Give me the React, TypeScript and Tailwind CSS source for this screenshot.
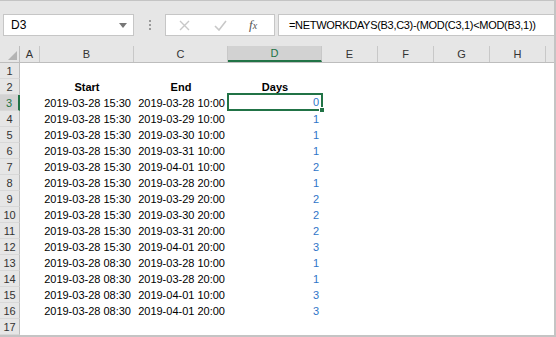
import React from 'react';

const cols = [
  { key: 'A', w: 'w-[20px]' },
  { key: 'B', w: 'w-[94px]' },
  { key: 'C', w: 'w-[94px]' },
  { key: 'D', w: 'w-[94px]' },
  { key: 'E', w: 'w-[56px]' },
  { key: 'F', w: 'w-[56px]' },
  { key: 'G', w: 'w-[56px]' },
  { key: 'H', w: 'w-[56px]' },
];

const data: [string, string, number][] = [
  ['2019-03-28 15:30', '2019-03-28 10:00', 0],
  ['2019-03-28 15:30', '2019-03-29 10:00', 1],
  ['2019-03-28 15:30', '2019-03-30 10:00', 1],
  ['2019-03-28 15:30', '2019-03-31 10:00', 1],
  ['2019-03-28 15:30', '2019-04-01 10:00', 2],
  ['2019-03-28 15:30', '2019-03-28 20:00', 1],
  ['2019-03-28 15:30', '2019-03-29 20:00', 2],
  ['2019-03-28 15:30', '2019-03-30 20:00', 2],
  ['2019-03-28 15:30', '2019-03-31 20:00', 2],
  ['2019-03-28 15:30', '2019-04-01 20:00', 3],
  ['2019-03-28 08:30', '2019-03-28 10:00', 1],
  ['2019-03-28 08:30', '2019-03-28 20:00', 1],
  ['2019-03-28 08:30', '2019-04-01 10:00', 3],
  ['2019-03-28 08:30', '2019-04-01 20:00', 3],
];

function RowHead({ n, active }: { n: number; active?: boolean }) {
  return (
    <div
      className={
        'w-[20px] h-[16px] shrink-0 flex items-center justify-center text-[11px] border-b border-[#d8d8d8] ' +
        (active
          ? 'bg-[#d2d2d2] text-[#217346] border-r-2 border-r-[#217346]'
          : 'bg-[#e6e6e6] text-[#333] border-r border-r-[#bdbdbd]')
      }
    >
      {n}
    </div>
  );
}

function Row({ n, children, active }: { n: number; children?: React.ReactNode; active?: boolean }) {
  return (
    <div className="flex h-[16px] leading-[16px]">
      <RowHead n={n} active={active} />
      {children}
    </div>
  );
}

export default function App() {
  return (
    <div
      className="w-[556px] h-[337px] bg-[#e6e6e6] border-t border-r-2 border-b-2 border-[#c4c4c4] overflow-hidden text-black"
      style={{ fontFamily: '"Liberation Sans", Arial, sans-serif' }}
    >
      {/* formula bar */}
      <div className="h-[45px] flex items-start pt-[13px]">
        <div className="ml-[3px] w-[131px] shrink-0 h-[22px] bg-white border border-[#c6c6c6] flex items-center pl-[7px] pr-[6px] text-[12px]">
          <span className="flex-1">D3</span>
          <svg width="8" height="5" viewBox="0 0 8 5">
            <path d="M0 0h8L4 5z" fill="#777" />
          </svg>
        </div>
        <div className="w-[31px] shrink-0 h-[22px] flex flex-col items-center justify-center gap-[2px]">
          <span className="w-[2px] h-[2px] bg-[#9a9a9a]" />
          <span className="w-[2px] h-[2px] bg-[#9a9a9a]" />
          <span className="w-[2px] h-[2px] bg-[#9a9a9a]" />
        </div>
        <div className="w-[110px] shrink-0 h-[22px] bg-white border border-[#c6c6c6] flex items-center">
          <svg className="ml-[13px]" width="11" height="11" viewBox="0 0 11 11">
            <path d="M1 1l9 9M10 1l-9 9" stroke="#c8c8c8" strokeWidth="1.4" />
          </svg>
          <svg className="ml-[24px]" width="13" height="11" viewBox="0 0 13 11">
            <path d="M1 6l4 4 7-9" stroke="#c8c8c8" strokeWidth="1.6" fill="none" />
          </svg>
          <span
            className="ml-[22px] text-[13px] text-[#555] italic"
            style={{ fontFamily: '"Liberation Serif", serif' }}
          >
            f<span className="text-[10px]">x</span>
          </span>
        </div>
        <div className="ml-[3px] flex-1 min-w-0 h-[22px] bg-white border border-[#c6c6c6] border-r-0 flex items-center pl-[10px] text-[11px] tracking-[-0.3px] whitespace-nowrap overflow-hidden">
          =NETWORKDAYS(B3,C3)-(MOD(C3,1)&lt;MOD(B3,1))
        </div>
      </div>

      {/* column headers */}
      <div className="flex h-[17px] border-b border-[#bdbdbd] text-[11px] text-[#333]">
        <div className="w-[20px] bg-[#e6e6e6] border-r border-[#bdbdbd] relative">
          <svg className="absolute right-[2px] bottom-[2px]" width="9" height="9" viewBox="0 0 9 9">
            <path d="M9 0v9H0z" fill="#b4b4b4" />
          </svg>
        </div>
        {cols.map((c) => (
          <div
            key={c.key}
            className={
              c.w +
              ' shrink-0 flex items-center justify-center border-r border-[#c8c8c8] ' +
              (c.key === 'D' ? 'bg-[#d2d2d2] text-[#217346] border-b-2 border-b-[#217346]' : 'bg-[#e6e6e6]')
            }
          >
            {c.key}
          </div>
        ))}
        <div className="flex-1 bg-[#e6e6e6]" />
      </div>

      {/* grid */}
      <div className="bg-white text-[11px]">
        <Row n={1} />
        <Row n={2}>
          <div className="w-[20px]" />
          <div className="w-[94px] text-center font-bold">Start</div>
          <div className="w-[94px] text-center font-bold">End</div>
          <div className="w-[94px] text-center font-bold">Days</div>
        </Row>
        {data.map(([s, e, d], i) => (
          <Row key={i} n={i + 3} active={i === 0}>
            <div className="w-[20px]" />
            <div className="w-[94px] text-right pr-[3px]">{s}</div>
            <div className="w-[94px] text-right pr-[3px]">{e}</div>
            {i === 0 ? (
              <div className="w-[96px] -ml-[1px] h-[18px] -mt-[2px] border-2 border-[#217346] text-right pr-[2px] leading-[14px] text-[#2f75c8] relative z-10">
                {d}
                <span className="absolute -right-[4px] -bottom-[4px] w-[6px] h-[6px] bg-[#217346] border border-white" />
              </div>
            ) : (
              <div className="w-[94px] text-right pr-[3px] text-[#2f75c8]">{d}</div>
            )}
          </Row>
        ))}
        <Row n={17} />
      </div>
    </div>
  );
}
